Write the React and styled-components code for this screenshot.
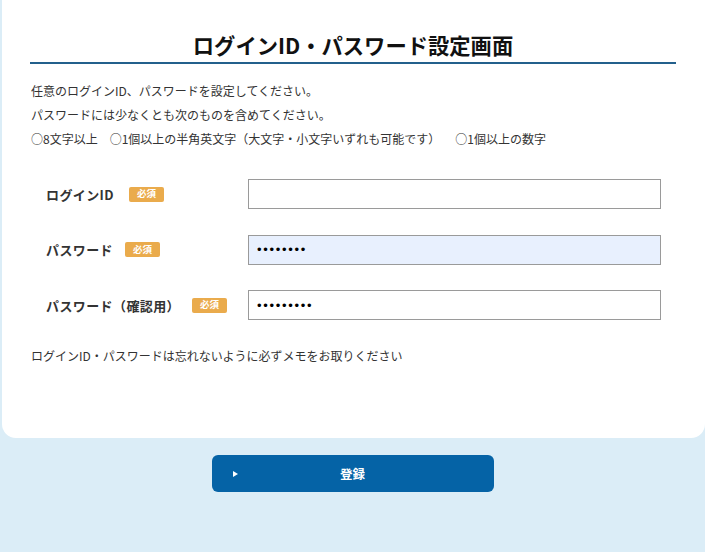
import React from "react";
import styled, { createGlobalStyle } from "styled-components";

const Global = createGlobalStyle`
  html, body { margin: 0; padding: 0; }
  body {
    background: #dbedf7;
    font-family: "Noto Sans CJK JP", "Noto Sans", sans-serif;
    color: #333;
    width: 705px;
    height: 552px;
    overflow: hidden;
  }
`;

const Page = styled.div`
  display: flex;
  flex-direction: column;
  align-items: stretch;
  min-height: 552px;
`;

const Card = styled.main`
  margin-left: 2px;
  background: #fff;
  border-radius: 0 0 14px 14px;
  padding: 0 29px 70px 28px;
`;

const Title = styled.h1`
  margin: 0;
  padding: 30px 0 2px;
  font-size: 21.3px;
  line-height: 30px;
  font-weight: 700;
  color: #111;
  text-align: center;
  border-bottom: 2px solid #23608c;
`;

const Intro = styled.div`
  margin-top: 15px;
  padding-left: 1px;
  font-size: 12px;
  line-height: 24px;
  color: #333;
`;

const Line = styled.p`
  margin: 0;
  white-space: pre;
`;

const Rules = styled.p`
  margin: 0;
  display: flex;
  white-space: pre;
`;

const RuleItem = styled.span`
  margin-left: ${(p) => p.$space || 0}px;
`;

const Form = styled.div`
  margin-top: 28px;
  padding: 0 15px 0 16px;
  display: flex;
  flex-direction: column;
  gap: 25.5px;
`;

const Row = styled.div`
  display: flex;
  align-items: center;
  height: 30px;
`;

const Label = styled.div`
  width: 202px;
  flex: none;
  display: flex;
  align-items: center;
  gap: ${(p) => p.$gap}px;
  font-size: 13px;
  font-weight: 700;
  letter-spacing: 0.4px;
  color: #333;
`;

const Badge = styled.span`
  display: inline-flex;
  align-items: center;
  justify-content: center;
  width: 35px;
  height: 15px;
  border-radius: 2px;
  background: #eaab4c;
  color: #fff;
  font-size: 9.5px;
  font-weight: 700;
  letter-spacing: 0;
  line-height: 1;
`;

const Input = styled.input`
  flex: 1;
  box-sizing: border-box;
  height: 30px;
  border: 1px solid #9a9a9a;
  border-radius: 0;
  background: ${(p) => (p.$filled ? "#e8f0fe" : "#fff")};
  padding: 0 8px;
  font-size: 13px;
  font-family: "Liberation Sans", Arial, sans-serif;
  color: #000;
  outline: none;
  letter-spacing: 1.7px;
`;

const Note = styled.p`
  margin: 24px 0 0;
  padding-left: 1px;
  font-size: 12px;
  line-height: 24px;
  color: #333;
`;

const ButtonWrap = styled.div`
  display: flex;
  justify-content: center;
  margin-top: 17px;
`;

const Button = styled.button`
  position: relative;
  width: 282px;
  height: 37px;
  border: none;
  border-radius: 6px;
  background: #0563a6;
  color: #fff;
  font-family: "Noto Sans CJK JP", sans-serif;
  font-size: 12.5px;
  font-weight: 700;
  cursor: pointer;
`;

const Arrow = styled.span`
  position: absolute;
  left: 21px;
  top: 50%;
  transform: translateY(-50%);
  width: 0;
  height: 0;
  border-top: 3px solid transparent;
  border-bottom: 3px solid transparent;
  border-left: 5px solid #fff;
`;

const rows = [
  { label: "ログインID", gap: 15, type: "text", value: "" },
  { label: "パスワード", gap: 12, type: "password", value: "12345678", filled: true },
  { label: "パスワード（確認用）", gap: 12, type: "password", value: "123456789" },
];

export default function App() {
  return (
    <>
      <Global />
      <Page>
        <Card>
          <Title>ログインID・パスワード設定画面</Title>
          <Intro>
            <Line>任意のログインID、パスワードを設定してください。</Line>
            <Line>パスワードには少なくとも次のものを含めてください。</Line>
            <Rules>
              <RuleItem>○8文字以上</RuleItem>
              <RuleItem $space={12}>○1個以上の半角英文字（大文字・小文字いずれも可能です）</RuleItem>
              <RuleItem $space={15}>○1個以上の数字</RuleItem>
            </Rules>
          </Intro>
          <Form>
            {rows.map((r) => (
              <Row key={r.label}>
                <Label $gap={r.gap}>
                  <span>{r.label}</span>
                  <Badge>必須</Badge>
                </Label>
                <Input type={r.type} defaultValue={r.value} $filled={r.filled} readOnly />
              </Row>
            ))}
          </Form>
          <Note>ログインID・パスワードは忘れないように必ずメモをお取りください</Note>
        </Card>
        <ButtonWrap>
          <Button type="button">
            <Arrow />
            登録
          </Button>
        </ButtonWrap>
      </Page>
    </>
  );
}
